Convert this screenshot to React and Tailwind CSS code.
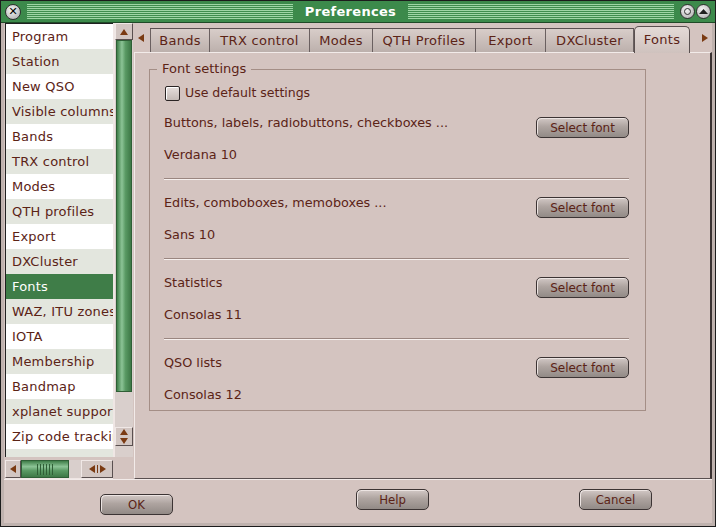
import React from "react";

const listItems = [
  "Program",
  "Station",
  "New QSO",
  "Visible columns",
  "Bands",
  "TRX control",
  "Modes",
  "QTH profiles",
  "Export",
  "DXCluster",
  "Fonts",
  "WAZ, ITU zones",
  "IOTA",
  "Membership",
  "Bandmap",
  "xplanet support",
  "Zip code tracking",
  "LoTW / eQSL",
];

const tabs = [
  { label: "Bands", w: "w-[60px]" },
  { label: "TRX control", w: "w-[100px]" },
  { label: "Modes", w: "w-[63px]" },
  { label: "QTH Profiles", w: "w-[103px]" },
  { label: "Export", w: "w-[70px]" },
  { label: "DXCluster", w: "w-[88px]" },
];

const sections = [
  { label: "Buttons, labels, radiobuttons, checkboxes ...", value: "Verdana 10" },
  { label: "Edits, comboboxes, memoboxes ...", value: "Sans 10" },
  { label: "Statistics", value: "Consolas 11" },
  { label: "QSO lists", value: "Consolas 12" },
];

function Arrow({ dir, className = "" }) {
  const pts = {
    up: "4,1 8,7 0,7",
    down: "0,1 8,1 4,7",
    left: "1,4 7,0 7,8",
    right: "7,4 1,0 1,8",
  };
  return (
    <svg width="8" height="8" viewBox="0 0 8 8" className={className}>
      <polygon points={pts[dir]} fill="#7a3a12" />
    </svg>
  );
}

function TitleBar() {
  const stripes =
    "flex-1 h-[15px] bg-[repeating-linear-gradient(to_bottom,#9fd6a6_0px,#9fd6a6_1px,#3f8d4e_1px,#3f8d4e_2px)]";
  return (
    <div className="h-[22px] bg-[#3c8a4b] border-b border-[#1f4a27] flex items-center px-[4px] gap-[6px]">
      <div className="w-[16px] h-[16px] rounded-full bg-[radial-gradient(circle_at_40%_35%,#f4f4f4,#a8a8a8)] border border-[#303030] flex items-center justify-center text-[11px] font-bold leading-none text-black">
        ✕
      </div>
      <div className={stripes} />
      <div className="px-[6px] text-white font-bold text-[13px] leading-none tracking-[0.3px]">
        Preferences
      </div>
      <div className={stripes} />
      <div className="flex gap-[1px]">
        <div className="w-[15px] h-[15px] rounded-full bg-[radial-gradient(circle_at_40%_35%,#f4f4f4,#a8a8a8)] border border-[#303030] flex items-center justify-center">
          <div className="w-[7px] h-[7px] rounded-full border border-[#303030]" />
        </div>
        <div className="w-[15px] h-[15px] rounded-full bg-[radial-gradient(circle_at_40%_35%,#f4f4f4,#a8a8a8)] border border-[#303030] flex items-center justify-center">
          <svg width="9" height="6" viewBox="0 0 9 6">
            <polygon points="4.5,0 9,5 0,5" fill="#202020" />
          </svg>
        </div>
      </div>
    </div>
  );
}

function ScrollButton({ children, className = "" }) {
  return (
    <div
      className={`bg-[#d2c6c2] border border-[#5a5050] border-t-[#f0e8e6] border-l-[#f0e8e6] flex flex-col items-center justify-center ${className}`}
    >
      {children}
    </div>
  );
}

function LeftPane() {
  return (
    <div className="w-[129px] flex flex-col">
      <div className="flex h-[434px]">
        <div className="w-[108px] border-t border-l border-[#202020] bg-white overflow-hidden">
          {listItems.map((item, i) => (
            <div
              key={item}
              className={`h-[25px] pl-[6px] flex items-center whitespace-nowrap text-[13px] tracking-[0.2px] ${
                item === "Fonts"
                  ? "bg-[#3f7d48] text-white"
                  : i % 2 === 1
                  ? "bg-[#e3e6de] text-[#5b2316]"
                  : "bg-white text-[#5b2316]"
              }`}
            >
              {item}
            </div>
          ))}
        </div>
        <div className="w-[2px] bg-[#efe6e4]" />
        <div className="w-[18px] flex flex-col bg-[#d9cfcc]">
          <ScrollButton className="h-[17px]">
            <Arrow dir="up" />
          </ScrollButton>
          <div className="h-[352px] mx-[1px] bg-[linear-gradient(to_right,#3f7d48,#8cc496_35%,#5a9a64_60%,#3d7846)] border border-[#2f5f36]" />
          <div className="flex-1" />
          <ScrollButton className="h-[19px] mb-[11px] gap-[1px]">
            <Arrow dir="up" />
            <Arrow dir="down" />
          </ScrollButton>
        </div>
      </div>
      <div className="h-[3px]" />
      <div className="flex h-[19px] bg-[#d9cfcc] w-[108px] border-b border-[#efe6e4]">
        <ScrollButton className="w-[16px]">
          <Arrow dir="left" />
        </ScrollButton>
        <div className="w-[48px] bg-[linear-gradient(to_bottom,#3f7d48,#8cc496_35%,#5a9a64_60%,#3d7846)] border border-[#2f5f36] flex items-center justify-center gap-[2px]">
          {[0, 1, 2, 3, 4, 5].map((k) => (
            <div key={k} className="w-[1px] h-[11px] bg-[#2f5f36]" />
          ))}
        </div>
        <div className="flex-1" />
        <ScrollButton className="w-[32px] flex-row">
          <div className="flex items-center gap-[1px]">
            <Arrow dir="left" />
            <div className="w-[1px] h-[8px] bg-[#7a3a12]" />
            <Arrow dir="right" />
          </div>
        </ScrollButton>
      </div>
    </div>
  );
}

function Tabs() {
  return (
    <div className="h-[29px] flex items-end relative">
      <div className="w-[16px] h-[29px] flex items-center justify-start pl-[3px]">
        <Arrow dir="left" />
      </div>
      <div className="flex h-[24px] border-t border-[#5a5050] bg-[linear-gradient(to_bottom,#d8cdc9,#bcb0ac)]">
        {tabs.map((t, i) => (
          <div
            key={t.label}
            className={`${t.w} flex items-center justify-center pt-[1px] text-[13px] tracking-[0.3px] text-[#5b2316] whitespace-nowrap border-r border-[#6a6060] ${
              i === 0 ? "border-l" : ""
            }`}
          >
            {t.label}
          </div>
        ))}
      </div>
      <div className="w-[56px] h-[27px] -mb-[1px] rounded-t-[5px] border border-b-0 border-[#5a5050] bg-[linear-gradient(to_bottom,#e4dad7,#cfc2be)] flex items-start justify-center pt-[3px] text-[13px] tracking-[0.3px] text-[#5b2316] relative z-10">
        Fonts
      </div>
      <div className="flex-1 h-[29px] flex items-center justify-end pr-[3px]">
        <Arrow dir="right" />
      </div>
    </div>
  );
}

function SelectButton() {
  return (
    <div className="w-[93px] h-[21px] rounded-[5px] border border-[#3c3434] bg-[linear-gradient(to_bottom,#d2c8c5,#aea4a0_45%,#928a86)] shadow-[inset_1px_1px_0_#ece4e2] flex items-center justify-center text-[12px] text-[#5b2316]">
      Select font
    </div>
  );
}

function FontPanel() {
  return (
    <div className="flex-1 border-t border-l border-[#f2ebe9] border-r-[2px] border-r-[#3a3232] border-b border-b-[#5a5050] pt-[8px] pl-[14px] pr-[64px]">
      <fieldset className="border border-[#a48e86] pb-[7px]">
        <legend className="ml-[7px] px-[5px] text-[13px] leading-[16px] text-[#5b2316]">
          Font settings
        </legend>
        <div className="pl-[14px] pr-[16px]">
          <div className="h-[16px] mt-[8px] flex items-center gap-[5px]">
            <div className="ml-[1px] w-[15px] h-[15px] border border-[#2a2424] rounded-[2px] bg-[linear-gradient(to_bottom,#e6dedc,#c4bab6)] shadow-[inset_1px_1px_0_#ffffff]" />
            <span className="text-[12.5px] text-[#5b2316]">Use default settings</span>
          </div>
          {sections.map((s, i) => (
            <div key={s.label}>
              <div className={`flex justify-between ${i === 0 ? "pt-[14px]" : "pt-[15px]"}`}>
                <div className="flex flex-col text-[12.8px] text-[#5b2316] leading-[16px]">
                  <span>{s.label}</span>
                  <span className="mt-[16px]">{s.value}</span>
                </div>
                <div className="mt-[2px]">
                  <SelectButton />
                </div>
              </div>
              {i < sections.length - 1 && (
                <div className="mt-[15px] h-[2px] border-t border-[#9a8680] border-b border-b-[#f6f0ee]" />
              )}
            </div>
          ))}
        </div>
      </fieldset>
    </div>
  );
}

function DialogButton({ label, className = "" }) {
  return (
    <div
      className={`w-[73px] h-[21px] rounded-[5px] border border-[#3c3434] bg-[linear-gradient(to_bottom,#d2c8c5,#aea4a0_45%,#928a86)] shadow-[inset_1px_1px_0_#ece4e2] flex items-center justify-center text-[13px] text-[#5b2316] font-['DejaVu_Sans_Condensed','DejaVu_Sans',sans-serif] ${className}`}
    >
      {label}
    </div>
  );
}

export default function App() {
  return (
    <div className="w-[716px] h-[527px] bg-[#d4c4c0] border border-[#1c1c1c] flex flex-col font-['DejaVu_Sans',sans-serif] overflow-hidden">
      <TitleBar />
      <div className="flex-1 flex flex-col border-l-[3px] border-r-[3px] border-b-[3px] border-l-[#bfb2ae] border-r-[#bfb2ae] border-b-[#bfb2ae]">
        <div className="flex h-[456px] pl-[1px]">
          <LeftPane />
          <div className="flex-1 flex flex-col">
            <Tabs />
            <FontPanel />
          </div>
        </div>
        <div className="flex-1 border-t border-[#f2ebe9] flex items-start pl-[96px] pt-[9px]">
          <DialogButton label="OK" className="mt-[5px]" />
          <DialogButton label="Help" className="ml-[183px]" />
          <DialogButton label="Cancel" className="ml-[150px]" />
        </div>
      </div>
    </div>
  );
}
